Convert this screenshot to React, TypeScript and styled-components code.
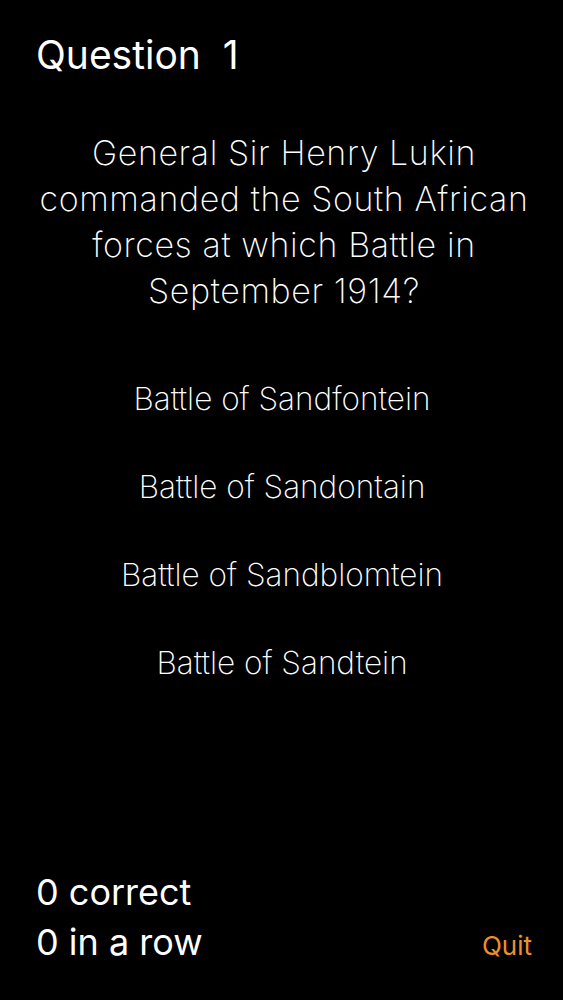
import React from 'react'
import styled, { createGlobalStyle } from 'styled-components'

const GlobalStyle = createGlobalStyle`
  html, body {
    margin: 0;
    padding: 0;
    background: #000;
  }
  * {
    box-sizing: border-box;
  }
`

const answers = [
  'Battle of Sandfontein',
  'Battle of Sandontain',
  'Battle of Sandblomtein',
  'Battle of Sandtein',
]

const App = () => {
  return (
    <>
      <GlobalStyle />
      <StScreen>
        {/* // Header */}
        <StTitle>Question&nbsp;&nbsp;1</StTitle>

        {/* // Question */}
        <StQuestion>
          General Sir Henry Lukin commanded the South African forces at which Battle in September 1914?
        </StQuestion>

        {/* // Answers */}
        <StAnswerList>
          {answers.map((el) => (
            <StAnswer key={el}>{el}</StAnswer>
          ))}
        </StAnswerList>

        {/* // Score */}
        <StFooter>
          <StScore>
            <StScoreLine>0 correct</StScoreLine>
            <StScoreLine>0 in a row</StScoreLine>
          </StScore>
          <StQuit>Quit</StQuit>
        </StFooter>
      </StScreen>
    </>
  )
}

// Wrapper
const StScreen = styled.div`
  display: flex;
  flex-direction: column;
  height: 1000px;
  padding: 32px 31px 33px 36px;
  background-color: #000;
  color: #fff;
  font-family: Inter, 'Liberation Sans', sans-serif;
`

// Header
const StTitle = styled.div`
  font-size: 39px;
  line-height: 46px;
  font-weight: 400;
`

// Question
const StQuestion = styled.div`
  margin: 52px -8px 0 -8px;
  font-size: 34px;
  line-height: 46px;
  font-weight: 200;
  letter-spacing: 0.6px;
  text-align: center;
`

// Answers
const StAnswerList = styled.div`
  display: flex;
  flex-direction: column;
  margin: 41px 0 0 -4px;
`
const StAnswer = styled.button`
  height: 88px;
  padding: 0;
  border: none;
  background: none;
  color: #fff;
  font-family: inherit;
  font-size: 31.5px;
  line-height: 88px;
  font-weight: 200;
  text-align: center;
  cursor: pointer;
`

// Score
const StFooter = styled.div`
  display: flex;
  align-items: flex-end;
  justify-content: space-between;
  margin-top: auto;
`
const StScore = styled.div`
  display: flex;
  flex-direction: column;
`
const StScoreLine = styled.div`
  font-size: 36px;
  line-height: 50px;
`
const StQuit = styled.button`
  padding: 0;
  border: none;
  background: none;
  color: #ee8f2c;
  font-family: inherit;
  font-size: 26px;
  line-height: 43px;
  cursor: pointer;
`

export default App
